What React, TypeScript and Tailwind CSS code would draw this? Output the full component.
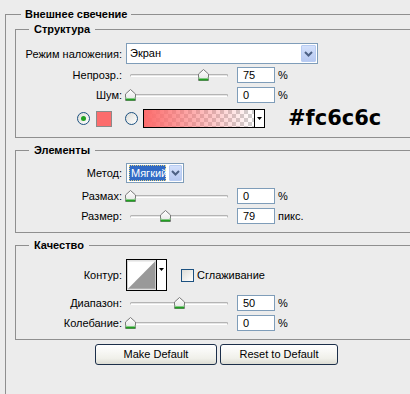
import type { ReactNode } from "react";

const UI = "font-['Liberation_Sans',Tahoma,sans-serif] text-[11px] text-black";

function Group({ title, className, children }: { title: string; className?: string; children: ReactNode }) {
  return (
    <fieldset className={`ml-[9px] border-t border-l border-b border-[#8f8f8f] ${className ?? ""}`}>
      <legend className="ml-[13px] px-[5px] text-[11px] font-bold leading-[14px]">{title}</legend>
      {children}
    </fieldset>
  );
}

function Row({ label, className, children }: { label: string; className?: string; children: ReactNode }) {
  return (
    <div className={`flex items-center ${className ?? ""}`}>
      <span className="w-[106px] text-right leading-[14px]">{label}</span>
      <div className="ml-[4px] flex items-center">{children}</div>
    </div>
  );
}

function Thumb() {
  return (
    <svg width="11" height="12" viewBox="0 0 11 12">
      <defs>
        <linearGradient id="th" x1="0" y1="0" x2="0" y2="1">
          <stop offset="0" stopColor="#ffffff" />
          <stop offset="1" stopColor="#e4e4e4" />
        </linearGradient>
      </defs>
      <path d="M0.5 5 L5.5 0.5 L10.5 5 L10.5 11.5 L0.5 11.5 Z" fill="url(#th)" stroke="#7b7b7b" />
      <path d="M1 10.5 H10" stroke="#21a121" strokeWidth="2" />
      <path d="M1 8 V10 M10 8 V10" stroke="#8fd18f" />
    </svg>
  );
}

function Slider({ left }: { left: number }) {
  return (
    <div className="relative h-[12px] w-[111px]">
      <div className="absolute left-[4px] top-[5px] h-[3px] w-[98px] rounded-[2px] border border-[#b4b4b4] border-b-white bg-[#e6e6e6]" />
      <div className="absolute top-0" style={{ left }}>
        <Thumb />
      </div>
    </div>
  );
}

function Field({ value }: { value: string }) {
  return (
    <div className="h-[16px] w-[38px] border border-[#7f9db9] bg-white pl-[5px] leading-[14px]">{value}</div>
  );
}

function Arrow({ w }: { w: string }) {
  return (
    <div className={`flex h-full ${w} items-center justify-center rounded-[1px] border border-[#b8ccf2] bg-[linear-gradient(#d3e0fb,#b7c9f1)]`}>
      <svg width="9" height="6" viewBox="0 0 9 6">
        <path d="M1 1 L4.5 4.5 L8 1" stroke="#4d6185" strokeWidth="2" fill="none" />
      </svg>
    </div>
  );
}

function Radio({ on }: { on?: boolean }) {
  return (
    <div className="flex h-[13px] w-[13px] items-center justify-center rounded-full border border-[#1c5180] bg-[linear-gradient(135deg,#dcdcd7,#ffffff)]">
      {on && <div className="h-[5px] w-[5px] rounded-full bg-[#21a121]" />}
    </div>
  );
}

function Button({ label, w }: { label: string; w: string }) {
  return (
    <div className={`flex h-[21px] ${w} items-center justify-center rounded-[3px] border border-[#1c2f4a] bg-[linear-gradient(#ffffff,#f0f0ea_70%,#dcdcd4)]`}>
      {label}
    </div>
  );
}

export default function App() {
  return (
    <div className={`h-[394px] w-[410px] overflow-hidden bg-[#ececec] pt-[7px] pl-[5px] ${UI}`}>
      <fieldset className="h-[400px] border-t border-l border-[#8f8f8f]">
        <legend className="ml-[15px] px-[4px] text-[11px] font-bold leading-[14px]">Внешнее свечение</legend>

        <Group title="Структура" className="mt-[1px] pb-[9px]">
          <Row label="Режим наложения:" className="mt-[7px] h-[21px]">
            <div className="flex h-[21px] w-[192px] items-center justify-between border border-[#7f9db9] bg-white p-[1px] pl-[3px]">
              <span>Экран</span>
              <Arrow w="w-[15px]" />
            </div>
          </Row>
          <Row label="Непрозр.:" className="mt-[3px] h-[16px]">
            <Slider left={72} />
            <Field value="75" />
            <span className="ml-[3px] self-start">%</span>
          </Row>
          <Row label="Шум:" className="mt-[4px] h-[16px]">
            <Slider left={-1} />
            <Field value="0" />
            <span className="ml-[3px] self-start">%</span>
          </Row>
          <div className="mt-[6px] flex h-[19px] items-center pl-[61px]">
            <Radio on />
            <div className="ml-[6px] h-[16px] w-[16px] border border-[#8a8a8a] bg-[#fc6c6c]" />
            <div className="ml-[13px]">
              <Radio />
            </div>
            <div className="ml-[5px] flex h-[19px] w-[122px] border border-black">
              <div className="h-full flex-1 bg-[conic-gradient(#d0d0d0_25%,#ffffff_0_50%,#d0d0d0_0_75%,#ffffff_0)] bg-[length:8px_8px]">
                <div className="h-full w-full bg-[linear-gradient(90deg,#fc6c6c,#fc6c6c00)]" />
              </div>
              <div className="flex w-[10px] items-center justify-center border-l border-black bg-white">
                <svg width="5" height="3" viewBox="0 0 5 3">
                  <path d="M0 0 H5 L2.5 3 Z" fill="#000" />
                </svg>
              </div>
            </div>
            <span className="ml-[23px] font-['DejaVu_Sans',sans-serif] text-[21px] leading-[19px] font-bold">#fc6c6c</span>
          </div>
        </Group>

        <Group title="Элементы" className="mt-[5px] pb-[8px]">
          <Row label="Метод:" className="mt-[6px] h-[20px]">
            <div className="flex h-[20px] w-[58px] items-center border border-[#7f9db9] bg-white p-[1px] pl-[2px]">
              <span className="flex h-[16px] w-[37px] items-center border border-dotted border-[#e0d080] bg-[#316ac5] pl-[1px] text-white">Мягкий</span>
              <div className="ml-auto h-full">
                <Arrow w="w-[13px]" />
              </div>
            </div>
          </Row>
          <Row label="Размах:" className="mt-[5px] h-[16px]">
            <Slider left={-1} />
            <Field value="0" />
            <span className="ml-[3px] self-start">%</span>
          </Row>
          <Row label="Размер:" className="mt-[4px] h-[16px]">
            <Slider left={34} />
            <Field value="79" />
            <span className="ml-[3px]">пикс.</span>
          </Row>
        </Group>

        <Group title="Качество" className="mt-[5px] pb-[8px]">
          <Row label="Контур:" className="mt-[7px] h-[32px]">
            <div className="flex h-[32px] w-[41px] border border-black bg-white">
              <svg width="30" height="30" viewBox="0 0 30 30">
                <rect x="0.5" y="0.5" width="29" height="29" fill="#fff" stroke="#d0d0d0" />
                <path d="M1 29 L29 1 L29 29 Z" fill="#999999" />
              </svg>
              <div className="flex w-[10px] justify-center border-l border-black pt-[8px]">
                <svg width="5" height="3" viewBox="0 0 5 3">
                  <path d="M0 0 H5 L2.5 3 Z" fill="#000" />
                </svg>
              </div>
            </div>
            <div className="ml-[14px] h-[13px] w-[13px] border border-[#1c5180] bg-[linear-gradient(135deg,#dcdcd7,#ffffff)]" />
            <span className="ml-[3px]">Сглаживание</span>
          </Row>
          <Row label="Диапазон:" className="mt-[4px] h-[16px]">
            <Slider left={48} />
            <Field value="50" />
            <span className="ml-[3px] self-start">%</span>
          </Row>
          <Row label="Колебание:" className="mt-[4px] h-[16px]">
            <Slider left={-1} />
            <Field value="0" />
            <span className="ml-[3px] self-start">%</span>
          </Row>
        </Group>

        <div className="mt-[4px] ml-[89px] flex gap-[3px]">
          <Button label="Make Default" w="w-[122px]" />
          <Button label="Reset to Default" w="w-[118px]" />
        </div>
      </fieldset>
    </div>
  );
}
